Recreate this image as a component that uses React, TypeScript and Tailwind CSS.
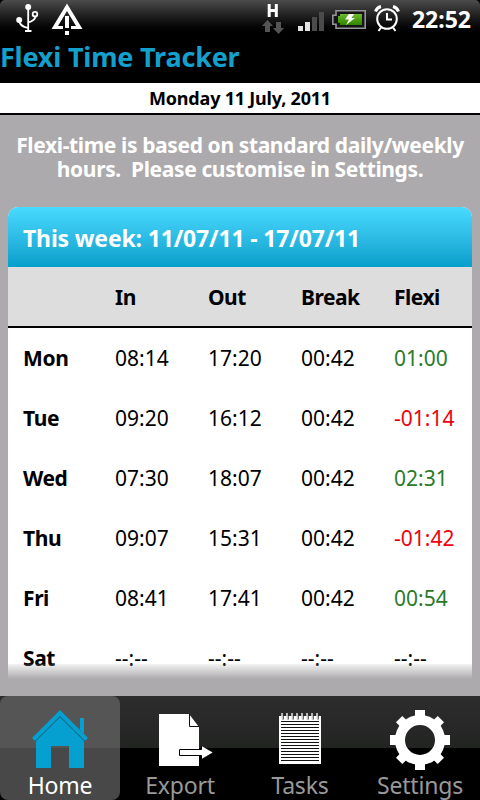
import { clsx } from 'clsx';
import type { ReactNode } from 'react';

interface Day {
  name: string;
  start: string;
  end: string;
  pause: string;
  flexi: string;
}

const days: Day[] = [
  { name: 'Mon', start: '08:14', end: '17:20', pause: '00:42', flexi: '01:00' },
  { name: 'Tue', start: '09:20', end: '16:12', pause: '00:42', flexi: '-01:14' },
  { name: 'Wed', start: '07:30', end: '18:07', pause: '00:42', flexi: '02:31' },
  { name: 'Thu', start: '09:07', end: '15:31', pause: '00:42', flexi: '-01:42' },
  { name: 'Fri', start: '08:41', end: '17:41', pause: '00:42', flexi: '00:54' },
  { name: 'Sat', start: '--:--', end: '--:--', pause: '--:--', flexi: '--:--' },
];

function flexiColor(value: string) {
  if (value.startsWith('--')) return 'text-black';
  return value.startsWith('-') ? 'text-[#f00010]' : 'text-[#2a7a2a]';
}

function UsbIcon() {
  return (
    <svg width="24" height="30" viewBox="0 0 24 30" fill="none" stroke="#fff" strokeWidth="1.8">
      <path d="M12.2 5v23M3.500 18c0 4 3 5.500 8.500 7M19.500 14c-1 3.500-4 4.500-7.300 5.500" />
      <circle cx="12.200" cy="4" r="3" fill="#fff" stroke="none" />
      <circle cx="3.200" cy="17" r="3" fill="#fff" stroke="none" />
      <circle cx="19" cy="11.200" r="2.300" />
      <path d="M9 28h6.500" strokeWidth="2" />
    </svg>
  );
}

function WarningIcon() {
  return (
    <svg width="32" height="32" viewBox="0 0 32 32">
      <path d="M16 0.500L31.500 26H20v-3h5L16 8 7 23h5v3H0.500z" fill="#fff" />
      <path d="M14 13h4v12h-4zM14 28h4v4h-4z" fill="#fff" />
    </svg>
  );
}

function DataIcon() {
  return (
    <svg width="22" height="31" viewBox="0 0 22 31">
      <path d="M7.200 1v13M14.300 1v13M7 7.500h8" stroke="#fff" strokeWidth="3" />
      <path d="M5.500 17l5.500 6H8v6H3v-6H0zM16.500 31L11 25h3v-6h5v6h3z" fill="#555" />
    </svg>
  );
}

function SignalIcon() {
  return (
    <svg width="26" height="19" viewBox="0 0 26 19">
      <path d="M0 14h5v5H0zM7 10h5v9H7z" fill="#e2e2e2" />
      <path d="M14 5h5v14h-5zM21 0h5v19h-5z" fill="#4b4b4b" />
    </svg>
  );
}

function BatteryIcon() {
  return (
    <svg width="34" height="19" viewBox="0 0 34 19">
      <defs>
        <linearGradient id="charge" x1="0" y1="0" x2="0" y2="1">
          <stop offset="0" stopColor="#72ba35" />
          <stop offset="0.500" stopColor="#4b9e13" />
          <stop offset="1" stopColor="#2f8500" />
        </linearGradient>
      </defs>
      <path d="M4 .8h29.200v17.400H4v-4H.8V5.200H4z" fill="#151515" stroke="#96959b" strokeWidth="1.600" />
      <path d="M8 4h22v11H8v-2H6V6h2z" fill="url(#charge)" />
      <path d="M17 4h5l-2.500 4H23l-9 7 3-5.500h-4z" fill="#fff" />
    </svg>
  );
}

function AlarmIcon() {
  return (
    <svg width="26" height="27" viewBox="0 0 26 27" fill="none" stroke="#fff">
      <circle cx="13" cy="14" r="9.800" strokeWidth="2" />
      <path d="M13 8v6.500h5" strokeWidth="2" />
      <path d="M7 22.500L4.500 26M19 22.500l2.500 3.500" strokeWidth="2" />
      <path d="M1.500 6.500Q3 2.500 7 1.500M24.500 6.500Q23 2.500 19 1.500" strokeWidth="3" />
    </svg>
  );
}

function HomeIcon() {
  return (
    <svg width="60" height="60" viewBox="0 0 60 60" fill="#05a0cf">
      <path d="M50 8h4v16l-4-4z" />
      <path d="M30 6l24 24v28H39V36H21v22H6V30z" />
      <path d="M30 0l28 28-3 3L30 6 5 31l-3-3z" />
      <path d="M5 31.500L30 6.800 55 31.500" fill="none" stroke="#10657f" strokeWidth="1" />
    </svg>
  );
}

function ExportIcon() {
  return (
    <svg width="60" height="60" viewBox="0 0 60 60">
      <path d="M9 4h30l10 13v39H9z" fill="#fff" />
      <path d="M39.500 4v12.500H49" fill="none" stroke="#111" strokeWidth="1" />
      <path d="M29.500 39.500H51.500V36L62.700 42.500 51.500 49V45.500H29.500z" fill="#fff" />
      <path d="M51.500 36v3.500h-22v6h22V49" fill="none" stroke="#000" strokeWidth="1" />
    </svg>
  );
}

function TasksIcon() {
  const lines = Array.from({ length: 14 }, (_, i) => 11 + i * 3);
  const rings = Array.from({ length: 8 }, (_, i) => 12 + i * 5);

  return (
    <svg width="60" height="60" viewBox="0 0 60 60">
      <path d="M9 6h42v48H9z" fill="#fff" />
      {lines.map((y) => (
        <path key={y} d={`M11 ${y + 0.5}h38`} stroke="#111" strokeWidth="1" />
      ))}
      {rings.map((x) => (
        <g key={x} fill="none">
          <path d={`M${x + 1} 4v5.500`} stroke="#333" strokeWidth="1.500" />
          <path d={`M${x} 3v6.500`} stroke="#e5e5e5" strokeWidth="1.500" />
        </g>
      ))}
    </svg>
  );
}

function SettingsIcon() {
  return (
    <svg width="60" height="60" viewBox="0 0 60 60" fill="#fff">
      <circle cx="30" cy="30" r="20" fill="none" stroke="#fff" strokeWidth="10" />
      {[0, 90, 180, 270].map((angle) => (
        <path key={angle} d="M25 0h10v8H25z" transform={`rotate(${angle} 30 30)`} />
      ))}
      {[45, 135, 225, 315].map((angle) => (
        <path key={angle} d="M25.500 .5h9V8h-9z" transform={`rotate(${angle} 30 30)`} />
      ))}
    </svg>
  );
}

interface TabProps {
  label: string;
  icon: ReactNode;
  active?: boolean;
}

function Tab({ label, icon, active }: TabProps) {
  return (
    <div
      className={clsx(
        'flex flex-col items-center h-[104px] pt-[14px] [&>svg]:overflow-visible [&>svg]:shrink-0',
        active
          ? 'rounded-lg bg-linear-to-b from-[#555555] from-50% to-[#484848] to-50% text-white'
          : 'text-[#999999]'
      )}
    >
      {icon}
      <span className="text-[23px] leading-[28px] mt-px tracking-[-0.2px] whitespace-nowrap">{label}</span>
    </div>
  );
}

export default function App() {
  return (
    <div className="w-[480px] h-[800px] overflow-hidden flex flex-col bg-[#acaaac] font-['Noto_Sans',sans-serif]">
      {/* Status bar */}
      <div className="h-[38px] shrink-0 bg-black">
        <div className="h-[38px] flex items-start rounded-t-[5px] bg-linear-to-b from-[#4c4c4c] to-black text-white">
          <div className="flex gap-[11px] pl-4 pt-[3px]">
            <UsbIcon />
            <WarningIcon />
          </div>
          <div className="flex items-start ml-auto pr-[9px]">
            <div className="pt-[3px] mr-[14px]"><DataIcon /></div>
            <div className="pt-3 mr-2"><SignalIcon /></div>
            <div className="pt-[10px] mr-2"><BatteryIcon /></div>
            <div className="pt-[5px] mr-[12px]"><AlarmIcon /></div>
            <span className="text-[23px] leading-[38px] font-bold">22:52</span>
          </div>
        </div>
      </div>

      <h1 className="h-[45px] shrink-0 bg-black text-[#14a0cd] text-[27px] leading-[38px] font-bold tracking-[-0.2px] whitespace-nowrap">
        Flexi Time Tracker
      </h1>

      <div className="h-8 shrink-0 bg-white border-b-2 border-black text-center text-[18px] leading-[31px] font-bold tracking-[-0.2px]">
        Monday 11 July, 2011
      </div>

      <p className="h-[92px] shrink-0 pt-[18px] text-center text-white text-[21px] leading-6 font-bold tracking-[-0.37px] whitespace-pre">
        {'Flexi-time is based on standard daily/weekly\nhours.  Please customise in Settings.'}
      </p>

      {/* Week table */}
      <div className="relative mx-2 h-[472px] shrink-0 overflow-hidden rounded-t-[10px] bg-white text-[21px] text-black">
        <h2 className="h-[60px] pl-[15px] bg-linear-to-b from-[#48daff] to-[#029fcb] text-white text-[23px] leading-[62px] font-bold tracking-[-0.16px]">
          This week: 11/07/11 - 17/07/11
        </h2>
        <div className="grid grid-cols-[92px_93px_93px_93px_1fr] h-[61px] pl-[15px] bg-[#dddddd] border-b-2 border-black leading-[60px] font-bold tracking-[-0.5px]">
          <span />
          <span>In</span>
          <span>Out</span>
          <span>Break</span>
          <span>Flexi</span>
        </div>
        {days.map((day) => (
          <div key={day.name} className="grid grid-cols-[92px_93px_93px_93px_1fr] h-[60px] pl-[15px] leading-[60px] whitespace-nowrap">
            <span className="font-bold tracking-[-0.4px]">{day.name}</span>
            <span>{day.start}</span>
            <span>{day.end}</span>
            <span>{day.pause}</span>
            <span className={flexiColor(day.flexi)}>{day.flexi}</span>
          </div>
        ))}
        <div className="absolute inset-x-0 bottom-0 h-[15px] bg-linear-to-b from-[#acaaac]/15 to-[#acaaac]" />
      </div>

      {/* Bottom tabs */}
      <div className="mt-auto h-[104px] shrink-0 grid grid-cols-4 bg-linear-to-b from-[#2d2d2d] via-[#222422] via-50% to-black to-50%">
        <Tab label="Home" icon={<HomeIcon />} active />
        <Tab label="Export" icon={<ExportIcon />} />
        <Tab label="Tasks" icon={<TasksIcon />} />
        <Tab label="Settings" icon={<SettingsIcon />} />
      </div>
    </div>
  );
}
